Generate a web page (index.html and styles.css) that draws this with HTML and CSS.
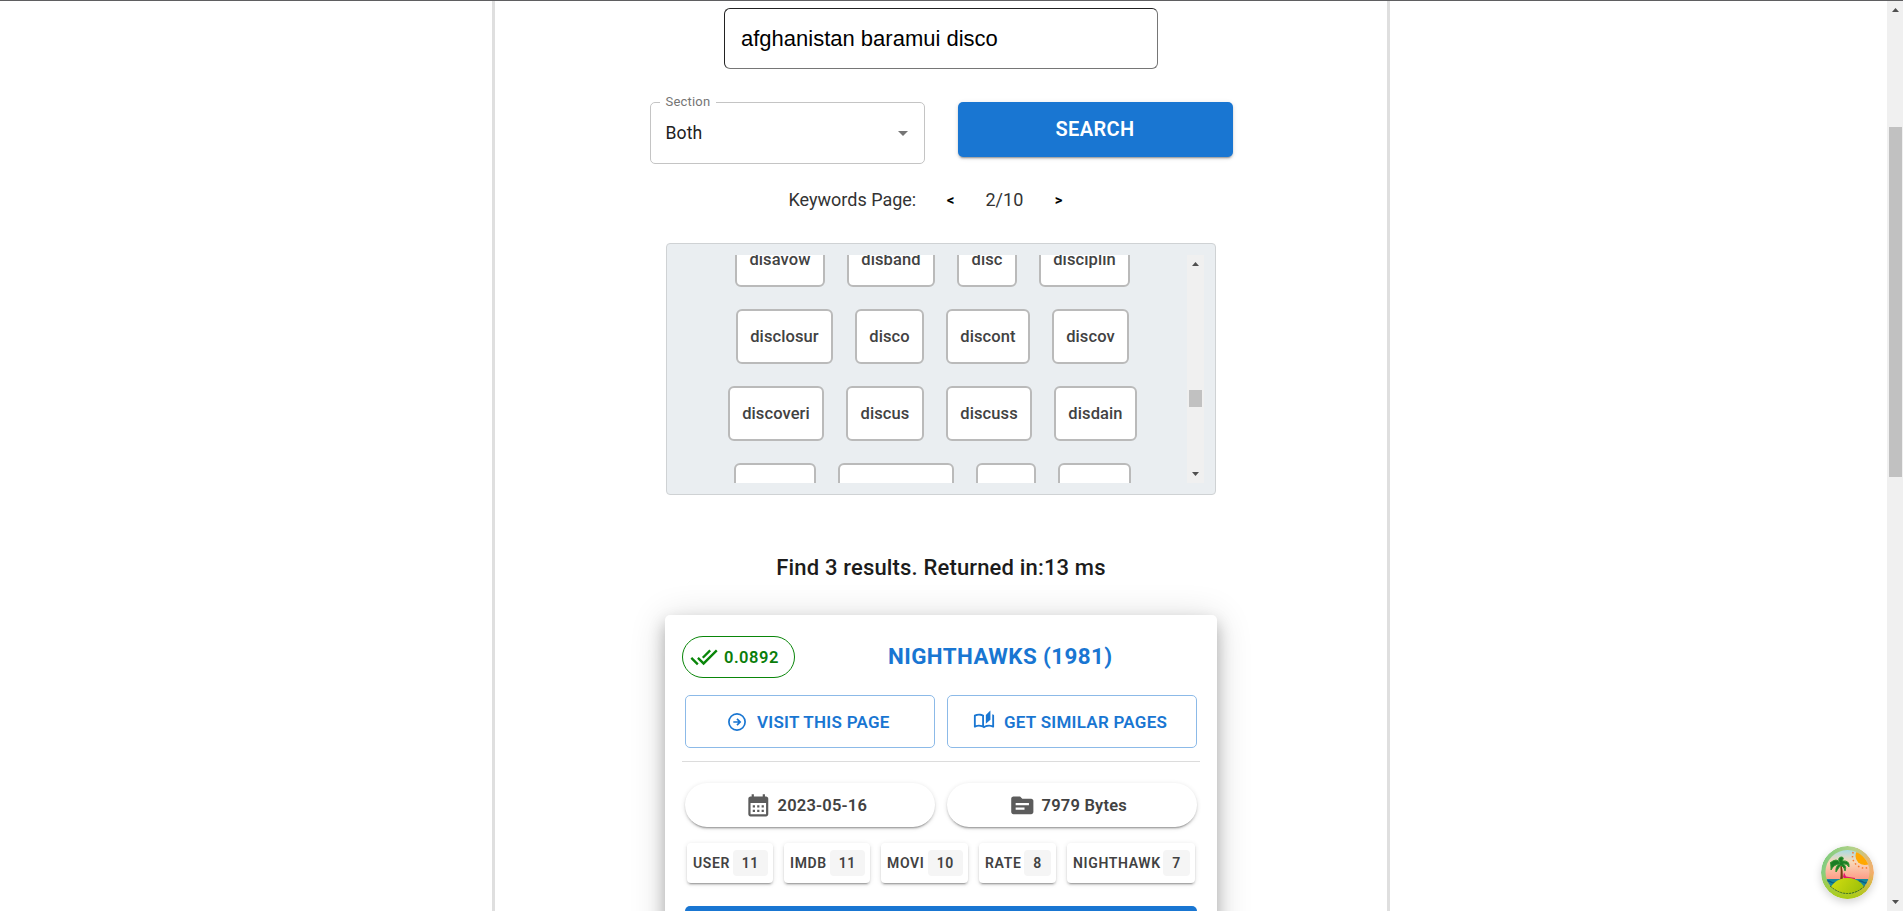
FILE: index.html
```html
<!DOCTYPE html>
<html lang="en">
<head>
<meta charset="utf-8">
<title>Search</title>
<link rel="stylesheet" href="styles.css">
</head>
<body>
<div class="window">
  <main class="page">
    <section class="column">
      <input class="query" type="text" value="afghanistan baramui disco">
      <div class="controls">
        <fieldset class="select">
          <legend>Section</legend>
          <span class="select-value">Both</span>
          <svg class="caret" viewBox="0 0 10 5"><path d="M0 0h10L5 5z"/></svg>
        </fieldset>
        <button class="search">SEARCH</button>
      </div>
      <div class="pager">
        <span class="pager-label">Keywords Page:</span>
        <b>&lt;</b>
        <span class="pager-count">2/10</span>
        <b>&gt;</b>
      </div>
      <div class="keywords">
        <div class="rows">
          <div class="row"><span class="w90">disavow</span><span class="w88">disband</span><span class="w60">disc</span><span class="w91">disciplin</span></div>
          <div class="row"><span class="w97">disclosur</span><span class="w69">disco</span><span class="w84">discont</span><span class="w77">discov</span></div>
          <div class="row"><span class="w96">discoveri</span><span class="w78">discus</span><span class="w86">discuss</span><span class="w83">disdain</span></div>
          <div class="row"><span class="w82"></span><span class="w116"></span><span class="w60"></span><span class="w73"></span></div>
        </div>
        <div class="bar bar-inner">
          <svg viewBox="0 0 7 4"><path d="M0 4h7L3.500 0z"/></svg>
          <i class="thumb"></i>
          <svg viewBox="0 0 7 4"><path d="M0 0h7L3.500 4z"/></svg>
        </div>
      </div>
      <h2 class="summary">Find 3 results. Returned in:13 ms</h2>
      <article class="card">
        <header class="card-head">
          <span class="score"><svg viewBox="0 0 24 24"><path d="M18 7l-1.410-1.410-6.340 6.340 1.410 1.410L18 7zm4.240-1.410L11.660 16.170 7.480 12l-1.410 1.410L11.660 19l12-12-1.420-1.410zM.41 13.410L6 19l1.410-1.410L1.830 12 .41 13.410z"/></svg><span>0.0892</span></span>
          <a class="title">NIGHTHAWKS (1981)</a>
        </header>
        <div class="pair actions">
          <a class="action visit"><svg viewBox="0 0 18 18" fill="none" stroke="currentColor"><circle cx="9" cy="9" r="8.100" stroke-width="1.700"/><path d="M5.300 9h6.500M9 5.900L12.100 9 9 12.100" stroke-width="1.700"/></svg><span>VISIT THIS PAGE</span></a>
          <a class="action similar"><svg viewBox="0 0 24 24"><path d="M22.470 5.200c-.47-.24-.96-.44-1.470-.61v12.030c-1.140-.41-2.310-.62-3.500-.62-1.900 0-3.780.54-5.500 1.580V5.480C10.380 4.550 8.510 4 6.500 4c-1.790 0-3.480.44-4.970 1.200-.33.160-.53.510-.53.880v12.080c0 .58.470.99 1 .99.160 0 .320-.04.480-.12C3.690 18.400 5.050 18 6.500 18c2.070 0 3.980.82 5.500 2 1.520-1.180 3.430-2 5.500-2 1.450 0 2.810.4 4.020 1.040.16.080.32.120.48.120.52 0 1-.41 1-.99V6.080c0-.37-.2-.72-.53-.88zM10 16.620C8.860 16.210 7.690 16 6.500 16s-2.360.21-3.500.62V6.710C4.110 6.240 5.280 6 6.500 6c1.200 0 2.390.25 3.500.72v9.900zM19 .5l-5 5V15l5-4.500V.5z"/></svg><span>GET SIMILAR PAGES</span></a>
        </div>
        <hr>
        <div class="pair">
          <div class="pill"><svg viewBox="0 0 24 24"><path d="M19 4h-1V2h-2v2H8V2H6v2H5c-1.110 0-1.990.9-1.990 2L3 20c0 1.100.89 2 2 2h14c1.100 0 2-.9 2-2V6c0-1.100-.9-2-2-2zm0 16H5V10h14v10zM9 14H7v-2h2v2zm4 0h-2v-2h2v2zm4 0h-2v-2h2v2zm-8 4H7v-2h2v2zm4 0h-2v-2h2v2zm4 0h-2v-2h2v2z"/></svg><span>2023-05-16</span></div>
          <div class="pill"><svg viewBox="0 0 24 24"><path d="M20 6h-8l-2-2H4c-1.100 0-2 .9-2 2v12c0 1.100.9 2 2 2h16c1.100 0 2-.9 2-2V8c0-1.100-.9-2-2-2zm-6 10H6v-2h8v2zm4-4H6v-2h12v2z"/></svg><span>7979 Bytes</span></div>
        </div>
        <div class="tags">
          <div class="tag w86"><span>USER</span><em>11</em></div>
          <div class="tag w86"><span>IMDB</span><em>11</em></div>
          <div class="tag w87"><span>MOVI</span><em>10</em></div>
          <div class="tag w77"><span>RATE</span><em>8</em></div>
          <div class="tag w128"><span>NIGHTHAWK</span><em>7</em></div>
        </div>
        <div class="more"></div>
      </article>
    </section>
  </main>
  <div class="bar bar-page">
    <svg viewBox="0 0 7 4"><path d="M0 4h7L3.500 0z"/></svg>
    <i class="thumb"></i>
    <svg viewBox="0 0 7 4"><path d="M0 0h7L3.500 4z"/></svg>
  </div>
</div>
<svg class="island" viewBox="0 0 53 53">
  <defs>
    <linearGradient id="ring" x1="0" y1="0.300" x2="1" y2="0.600"><stop offset="0" stop-color="#7dcb7c"/><stop offset=".5" stop-color="#b5d28a"/><stop offset="1" stop-color="#fba868"/></linearGradient>
    <linearGradient id="ringlow" x1="0" y1="0" x2="0" y2="1"><stop offset=".5" stop-color="#a8c80c" stop-opacity="0"/><stop offset="1" stop-color="#a8cc10"/></linearGradient>
    <linearGradient id="sky" x1="0" y1="0" x2="0" y2="1"><stop offset="0" stop-color="#8fdcf0"/><stop offset=".3" stop-color="#f8d8b8"/><stop offset=".7" stop-color="#ff8f7c"/></linearGradient>
    <linearGradient id="hill" x1="0" y1="0" x2="1" y2="0.600"><stop offset="0" stop-color="#d8e010"/><stop offset="1" stop-color="#8fb808"/></linearGradient>
    <clipPath id="disc"><circle cx="26.500" cy="26" r="22"/></clipPath>
  </defs>
  <circle cx="26.500" cy="26.500" r="26.500" fill="url(#ring)"/>
  <circle cx="26.500" cy="26.500" r="26.500" fill="url(#ringlow)"/>
  <g clip-path="url(#disc)">
    <path d="M0 0h53v53H0z" fill="url(#sky)"/>
    <path d="M0 33h53v20H0z" fill="#16889c"/>
    <path d="M4 36q3-2 6 0t6 0M36 36q3-2 6 0t6 0M4 41q3-2 6 0M42 41q3-2 6 0" fill="none" stroke="#0b5c80" stroke-width="1.300"/>
    <circle cx="43.500" cy="10" r="9" fill="#ffa800"/>
    <circle cx="43.500" cy="10" r="12" fill="none" stroke="#f47a30" stroke-width="1.500" stroke-dasharray="1.500 2.500"/>
    <path d="M18.500 15q2 9 .5 20h3q0-11-2-20z" fill="#743c12"/>
    <path d="M23 26.500l2 4 9 1.500v3l-9-1-3-3z" fill="#e01868"/>
    <ellipse cx="26.500" cy="49" rx="19" ry="17" fill="url(#hill)"/>
  </g>
  <path d="M19 17Q16 11 9 17q1 0 1 7 3-6 9-6-5 2-4 8 3-5 5-7 4 3 4 6 2-5-2-7 4-1 6 3 1-7-7-6 3-4-1-4-4 1-1 6z" fill="#1b7c24" stroke="#2e962f" stroke-width="1"/>
  <path d="M9 40q17.500 15 35 0" fill="none" stroke="#255b1d" stroke-width=".8" stroke-dasharray="2 1"/>
</svg>
</body>
</html>
```
FILE: styles.css
```css
* { box-sizing: border-box; }
body { margin: 0; overflow: hidden; background: #fff; font-family: Roboto, "Liberation Sans", sans-serif; color: #212121; }
.window { display: flex; justify-content: space-between; height: 911px; border-top: 1px solid #5f5f61; overflow: hidden; }
.page { padding-left: 492px; }
.column { width: 898px; height: 910px; padding-top: 7px; border: solid #dfdfdf; border-width: 0 3px; display: flex; flex-direction: column; align-items: center; }
.column > * { flex-shrink: 0; }
.query { width: 434px; height: 61px; padding: 1px 16px; border: 1px solid #767676; border-top-color: #222; border-left-color: #222; border-radius: 6px; font: 22px "Liberation Sans", Arial, sans-serif; color: #000; background: #fff; outline: 0; }
.controls { display: flex; align-items: flex-start; gap: 33px; margin-top: 25px; height: 70px; }
.select { width: 275px; height: 70px; margin: 0; padding: 0 16px 8px 15px; border: 1px solid #c4c4c4; border-radius: 5px; display: flex; align-items: center; justify-content: space-between; }
.select legend { margin-left: -6px; padding: 0 6px 1px; font-size: 13px; line-height: 15px; color: #757575; letter-spacing: .2px; }
.select-value { font-size: 17.600px; letter-spacing: .1px; }
.caret { width: 10px; height: 5px; margin-top: 1px; fill: #757575; }
.search { width: 275px; height: 55px; margin-top: 8px; padding: 0 0 1px; border: 0; border-radius: 5px; background: #1976d2; color: #fff; font: 600 20px Roboto, sans-serif; letter-spacing: .4px; box-shadow: 0 3px 1px -2px rgba(0,0,0,.2), 0 2px 2px rgba(0,0,0,.14), 0 1px 5px rgba(0,0,0,.12); }
.pager { display: flex; align-items: center; height: 24px; margin-top: 23px; margin-right: 30px; font-size: 18px; color: #333; }
.pager b { width: 10px; margin-top: 2px; font-size: 15px; color: #000; text-align: center; }
.pager-label { width: 127px; margin-right: 30px; white-space: nowrap; }
.pager-count { margin: 0 30px; width: 38px; white-space: nowrap; }
.keywords { display: flex; justify-content: space-between; width: 550px; height: 252px; margin-top: 32px; padding: 11px; border: 1px solid #cfd2d4; border-radius: 4px; background: #eaeef1; }
.rows { width: 509px; height: 228px; overflow: hidden; display: flex; flex-direction: column; gap: 22px; }
.row { display: flex; justify-content: center; gap: 22px; flex-shrink: 0; }
.row:first-child { margin-top: -23px; }
.row span { display: flex; align-items: center; justify-content: center; height: 55px; border: 2px solid #bababa; border-radius: 6px; background: #fff; font-size: 16.500px; font-weight: 500; letter-spacing: .1px; color: #424242; }
.w60 { width: 60px; } .w69 { width: 69px; } .w73 { width: 73px; } .w77 { width: 77px; } .w78 { width: 78px; }
.w82 { width: 82px; } .w83 { width: 83px; } .w84 { width: 84px; } .w86 { width: 86px; } .w87 { width: 87px; }
.w88 { width: 88px; } .w90 { width: 90px; } .w91 { width: 91px; } .w96 { width: 96px; } .w97 { width: 97px; }
.w116 { width: 116px; } .w128 { width: 128px; }
.bar { display: flex; flex-direction: column; align-items: center; background: #f0f0f0; padding: 7px 0; }
.bar svg { width: 7px; height: 4px; fill: #505050; }
.thumb { width: 13px; margin-bottom: auto; background: #c1c1c1; }
.bar-inner { width: 17px; height: 228px; }
.bar-inner .thumb { height: 17px; margin-top: 124px; }
.bar-page { width: 16px; height: 910px; }
.bar-page .thumb { height: 350px; margin-top: 115px; }
.summary { margin: 59px 0 0; font-size: 22px; line-height: 28px; font-weight: 500; letter-spacing: .16px; color: #1c1c1c; white-space: nowrap; }
.card { width: 552px; height: 400px; margin-top: 33px; padding: 21px 17px; border-radius: 5px; background: #fff; box-shadow: 0 8px 16px rgba(0,0,0,.25), 0 4px 36px rgba(0,0,0,.16); }
.card-head { display: flex; align-items: center; height: 42px; }
.score { display: flex; align-items: center; width: 113px; height: 42px; padding-left: 7px; border: 1px solid #0a860a; border-radius: 21px; color: #0a7d0a; font-size: 16.500px; font-weight: 600; letter-spacing: .5px; }
.score svg { width: 28px; height: 28px; margin-right: 6px; fill: #0a860a; }
.title { margin: -2px 0 0 93px; color: #1976d2; font-size: 22.400px; font-weight: 700; letter-spacing: .4px; white-space: nowrap; }
.pair { display: flex; gap: 12px; padding: 0 3px; }
.actions { margin-top: 17px; }
.action { display: flex; align-items: center; width: 250px; height: 53px; border: 1px solid #8cbae8; border-radius: 5px; color: #1976d2; font-size: 17px; font-weight: 600; letter-spacing: .26px; white-space: nowrap; }
.visit { padding-left: 42px; gap: 11px; }
.visit svg { width: 18px; height: 18px; }
.similar { padding-left: 25px; gap: 9px; }
.similar svg { width: 22px; height: 22px; fill: currentColor; margin-top: -2px; }
.card hr { width: 518px; height: 1px; margin: 13px 0 21px; border: 0; background: #dcdcdc; }
.pill { display: flex; align-items: center; justify-content: center; gap: 6px; width: 250px; height: 44px; padding-right: 8px; border-radius: 22px; color: #424242; font-size: 16.500px; font-weight: 600; letter-spacing: .2px; box-shadow: 0 3px 1px -2px rgba(0,0,0,.2), 0 2px 2px rgba(0,0,0,.14), 0 1px 5px rgba(0,0,0,.12); }
.pill svg { width: 26.600px; height: 26.600px; fill: #5c5c5c; }
.tags { display: flex; gap: 11px; margin: 16px 0 0 5px; }
.tag { display: flex; align-items: center; justify-content: space-between; height: 40px; padding: 0 5px 0 6px; border-radius: 4px; color: #424242; font-size: 14px; font-weight: 600; letter-spacing: .65px; white-space: nowrap; box-shadow: 0 3px 1px -2px rgba(0,0,0,.2), 0 2px 2px rgba(0,0,0,.14), 0 1px 5px rgba(0,0,0,.12); }
.tag em { height: 26px; padding: 0 9px; line-height: 26px; border-radius: 4px; background: #f5f5f5; font-style: normal; }
.more { height: 40px; margin: 23px 3px 0; border-radius: 5px; background: #1976d2; }
.island { position: absolute; left: 1821px; top: 846px; width: 53px; height: 53px; border-radius: 50%; box-shadow: 0 3px 8px rgba(0,0,0,.18); }
```
